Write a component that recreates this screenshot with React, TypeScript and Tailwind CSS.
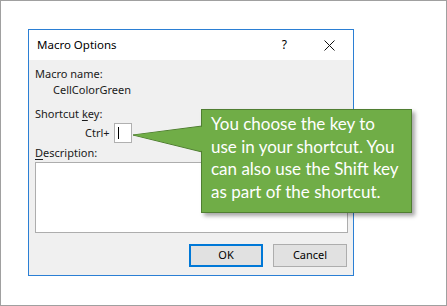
import React from 'react';

const ui = { fontFamily: '"Noto Sans", "Open Sans", sans-serif' };
const callFont = { fontFamily: 'Lato, "Open Sans", sans-serif' };

const Callout = () => {
  return (
    <div className="absolute left-[132px] top-[108px]">
      {/* pointer */}
      <svg className="absolute left-0 top-0" width="72" height="50" viewBox="0 0 72 50">
        <polygon points="0,26 69,17 69,43" fill="#70ad47" stroke="#507e32" strokeWidth="1" />
      </svg>
      <div
        className="absolute left-[68px] top-0 w-[211px] h-[104px] bg-[#70ad47] border border-[#507e32] shadow-[3px_3px_4px_rgba(0,0,0,0.35)] pl-[9px] pt-[3px] text-white text-[17px] leading-[22.7px]"
        style={callFont}
      >
        You choose the key to<br />
        use in your shortcut. You<br />
        can also use the Shift key<br />
        as part of the shortcut.
      </div>
      <svg className="absolute left-[1px] top-0" width="72" height="50" viewBox="0 0 72 50">
        <polygon points="0,26 70,17.5 70,42.5" fill="#70ad47" />
      </svg>
    </div>
  );
};

const App = () => {
  return (
    <div className="relative w-[447px] h-[306px] bg-white border border-[#a0a0a0] overflow-hidden text-[11px] text-[#1a1a1a]" style={ui}>
      <div className="ml-[27px] mt-[28px] w-[326px] h-[247px] border border-[#2b7fd4] bg-[#f0f0f0] flex flex-col">
        {/* title bar */}
        <div className="h-[30px] bg-white flex items-center pl-[8px] pr-[18px]">
          <span className="text-[11.5px] text-black">Macro Options</span>
          <span className="ml-auto text-[12px] text-black mr-[37px]">?</span>
          <svg width="11" height="11" viewBox="0 0 11 11">
            <path d="M0.5 0.5 L10.5 10.5 M10.5 0.5 L0.5 10.5" stroke="#111" strokeWidth="1" />
          </svg>
        </div>
        {/* body */}
        <div className="flex flex-col pl-[6px] pr-[5px]">
          <div className="mt-[6px] h-[16px] leading-[16px]">Macro name:</div>
          <div className="h-[16px] leading-[16px] pl-[18px]">CellColorGreen</div>
          <div className="mt-[8px] h-[16px] leading-[16px]">
            Shortcut <span className="underline underline-offset-2">k</span>ey:
          </div>
          <div className="mt-[1px] h-[20px] flex items-center pl-[50px] gap-[4px]">
            <span>Ctrl+</span>
            <div className="w-[18px] h-[20px] bg-white border border-[#b0b0b0] flex items-center pl-[3px]">
              <div className="w-[1px] h-[12px] bg-black" />
            </div>
          </div>
          <div className="mt-[2px] h-[16px] leading-[16px]">
            <span className="underline underline-offset-2">D</span>escription:
          </div>
          <div className="mt-[1px] h-[71px] bg-white border border-[#adadad]" />
          <div className="mt-[11px] flex justify-end gap-[10px] pr-[1px]">
            <button className="w-[74px] h-[23px] bg-[#e1e1e1] border-2 border-[#0078d7] text-[11px] text-black">OK</button>
            <button className="w-[74px] h-[23px] bg-[#e1e1e1] border border-[#adadad] text-[11px] text-black">Cancel</button>
          </div>
        </div>
      </div>
      <Callout />
    </div>
  );
};

export default App;
